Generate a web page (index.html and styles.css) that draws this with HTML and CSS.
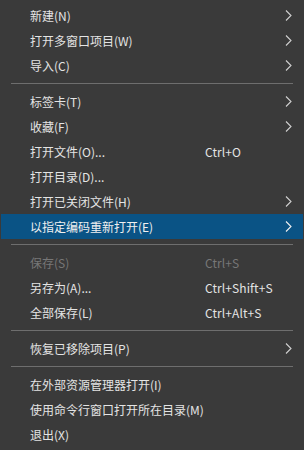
FILE: index.html
```html
<!DOCTYPE html>
<html lang="zh-CN">
<head>
<meta charset="utf-8">
<link rel="stylesheet" href="styles.css">
</head>
<body>
<div class="menu">
  <div class="item"><span class="label">新建(N)</span><span class="key"></span><span class="arrow"><svg width="7" height="11" viewBox="0 0 7 11"><polyline points="1,0.5 6,5.5 1,10.5" /></svg></span></div>
  <div class="item"><span class="label">打开多窗口项目(W)</span><span class="key"></span><span class="arrow"><svg width="7" height="11" viewBox="0 0 7 11"><polyline points="1,0.5 6,5.5 1,10.5" /></svg></span></div>
  <div class="item"><span class="label">导入(C)</span><span class="key"></span><span class="arrow"><svg width="7" height="11" viewBox="0 0 7 11"><polyline points="1,0.5 6,5.5 1,10.5" /></svg></span></div>
  <div class="sep"></div>
  <div class="item"><span class="label">标签卡(T)</span><span class="key"></span><span class="arrow"><svg width="7" height="11" viewBox="0 0 7 11"><polyline points="1,0.5 6,5.5 1,10.5" /></svg></span></div>
  <div class="item"><span class="label">收藏(F)</span><span class="key"></span><span class="arrow"><svg width="7" height="11" viewBox="0 0 7 11"><polyline points="1,0.5 6,5.5 1,10.5" /></svg></span></div>
  <div class="item"><span class="label">打开文件(O)...</span><span class="key">Ctrl+O</span><span class="arrow"></span></div>
  <div class="item"><span class="label">打开目录(D)...</span><span class="key"></span><span class="arrow"></span></div>
  <div class="item"><span class="label">打开已关闭文件(H)</span><span class="key"></span><span class="arrow"><svg width="7" height="11" viewBox="0 0 7 11"><polyline points="1,0.5 6,5.5 1,10.5" /></svg></span></div>
  <div class="item active"><span class="label">以指定编码重新打开(E)</span><span class="key"></span><span class="arrow"><svg width="7" height="11" viewBox="0 0 7 11"><polyline points="1,0.5 6,5.5 1,10.5" /></svg></span></div>
  <div class="sep"></div>
  <div class="item disabled"><span class="label">保存(S)</span><span class="key">Ctrl+S</span><span class="arrow"></span></div>
  <div class="item"><span class="label">另存为(A)...</span><span class="key">Ctrl+Shift+S</span><span class="arrow"></span></div>
  <div class="item"><span class="label">全部保存(L)</span><span class="key">Ctrl+Alt+S</span><span class="arrow"></span></div>
  <div class="sep"></div>
  <div class="item"><span class="label">恢复已移除项目(P)</span><span class="key"></span><span class="arrow"><svg width="7" height="11" viewBox="0 0 7 11"><polyline points="1,0.5 6,5.5 1,10.5" /></svg></span></div>
  <div class="sep"></div>
  <div class="item"><span class="label">在外部资源管理器打开(I)</span><span class="key"></span><span class="arrow"></span></div>
  <div class="item"><span class="label">使用命令行窗口打开所在目录(M)</span><span class="key"></span><span class="arrow"></span></div>
  <div class="item"><span class="label">退出(X)</span><span class="key"></span><span class="arrow"></span></div>
</div>
</body>
</html>
```
FILE: styles.css
```css
html, body {
  margin: 0;
  padding: 0;
  background: #3a3a3a;
}
.menu {
  width: 304px;
  height: 450px;
  box-sizing: border-box;
  padding: 3px 0;
  background: #3a3a3a;
  font-family: "Noto Sans CJK SC", "Noto Sans", sans-serif;
  font-size: 12px;
  color: #e4e4e4;
  display: flex;
  flex-direction: column;
}
.item {
  height: 25px;
  display: grid;
  grid-template-columns: 175px 1fr 7px;
  align-items: center;
  padding: 0 11px 0 29px;
  margin: 0 1px;
  white-space: nowrap;
}
.label {
  overflow: visible;
}
.key {
  letter-spacing: 0.1px;
}
.arrow {
  display: flex;
  align-items: center;
}
.arrow svg {
  display: block;
  fill: none;
  stroke: #d0d0d0;
  stroke-width: 1.1;
}
.active {
  background: #0a5385;
  color: #f0f0f0;
}
.active .arrow svg {
  stroke: #f0f0f0;
}
.disabled {
  color: #777777;
}
.sep {
  height: 1px;
  margin: 5px 11px;
  background: #6e6e6e;
}
```
